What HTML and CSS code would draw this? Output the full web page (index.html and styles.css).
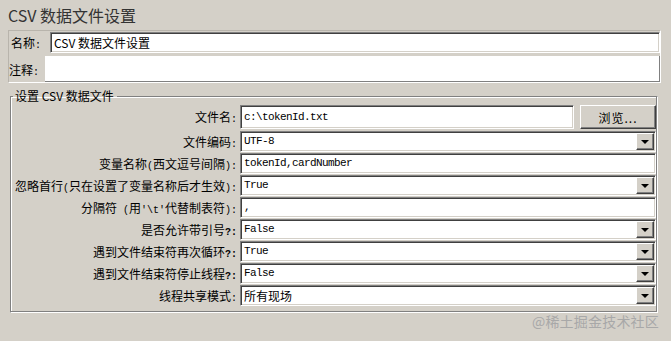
FILE: index.html
```html
<!DOCTYPE html>
<html lang="zh-CN">
<head>
  <meta charset="UTF-8">
  <title>CSV 数据文件设置</title>
  <link rel="stylesheet" href="styles.css">
</head>
<body>
  <h1 class="title">CSV 数据文件设置</h1>
  <div class="info">
    <div class="info-row">
      <label class="info-label">名称<span class="hw">:</span></label>
      <div class="field name-field">CSV 数据文件设置</div>
    </div>
    <div class="info-row comment-row">
      <label class="info-label">注释<span class="hw">:</span></label>
      <div class="comment-box"></div>
    </div>
  </div>

  <fieldset class="group">
    <legend>设置 CSV 数据文件</legend>
    <div class="grid">
      <label class="lbl first">文件名<span class="hw">:</span></label>
      <div class="file-row">
        <div class="field mono">c:\tokenId.txt</div>
        <button class="btn">浏览...</button>
      </div>

      <label class="lbl">文件编码<span class="hw">:</span></label>
      <div class="field combo mono">UTF-8<span class="arrow"></span></div>

      <label class="lbl">变量名称<span class="hw">(</span>西文逗号间隔<span class="hw">):</span></label>
      <div class="field mono">tokenId,cardNumber</div>

      <label class="lbl">忽略首行<span class="hw">(</span>只在设置了变量名称后才生效<span class="hw">):</span></label>
      <div class="field combo mono">True<span class="arrow"></span></div>

      <label class="lbl">分隔符<span class="hw"> (</span>用<span class="hw">'\t'</span>代替制表符<span class="hw">):</span></label>
      <div class="field mono">,</div>

      <label class="lbl">是否允许带引号<span class="hw q">?:</span></label>
      <div class="field combo mono">False<span class="arrow"></span></div>

      <label class="lbl">遇到文件结束符再次循环<span class="hw q">?:</span></label>
      <div class="field combo mono">True<span class="arrow"></span></div>

      <label class="lbl">遇到文件结束符停止线程<span class="hw q">?:</span></label>
      <div class="field combo mono">False<span class="arrow"></span></div>

      <label class="lbl">线程共享模式<span class="hw">:</span></label>
      <div class="field combo">所有现场<span class="arrow"></span></div>
    </div>
  </fieldset>

  <div class="watermark">@稀土掘金技术社区</div>
</body>
</html>
```

FILE: styles.css
```css
body {
  margin: 0;
  background: #d4d0c8;
  font-family: "Noto Sans CJK SC", "Liberation Sans", sans-serif;
  font-size: 12px;
  color: #000;
  width: 671px;
  height: 341px;
  position: relative;
  overflow: hidden;
}
.title {
  margin: 0;
  padding: 4px 0 0 8px;
  height: 26px;
  font-size: 16px;
  font-weight: normal;
  line-height: 22px;
  color: #333;
}
.info {
  margin: 0 10px 0 8px;
  border: 1px solid #b8b4ac;
  border-right-color: #fff;
  border-bottom-color: #fff;
  height: 51px;
}
.info-row {
  display: flex;
  align-items: center;
  height: 23px;
}
.info-label {
  width: 41px;
  padding-left: 2px;
  box-sizing: border-box;
  font-size: 12px;
}
.name-field {
  flex: 1;
  height: 22px;
}
.comment-row {
  margin-top: 2px;
  height: 26px;
}
.comment-row .info-label {
  width: 36px;
  padding-left: 0;
}
.comment-box {
  flex: 1;
  height: 26px;
  background: #fff;
  border-right: 1px solid #808080;
  border-bottom: 1px solid #808080;
  box-sizing: border-box;
}
.hw {
  font-family: "Liberation Mono", monospace;
  font-size: 10px;
}
.hw.q {
  font-weight: bold;
}
.field {
  position: relative;
  box-sizing: border-box;
  height: 21px;
  background: #fff;
  border-top: 1px solid #808080;
  border-left: 1px solid #808080;
  border-right: 1px solid #fff;
  border-bottom: 1px solid #fff;
  box-shadow: inset 1px 1px 0 #404040, inset -1px -1px 0 #d4d0c8;
  padding: 0 0 0 3px;
  line-height: 19px;
  white-space: nowrap;
}
.mono {
  font-family: "Liberation Mono", monospace;
  font-size: 11px;
  letter-spacing: -0.6px;
}
.group {
  margin: 6px 13px 0 10px;
  padding: 2px 0 3px 0;
  border: 1px solid #808080;
  border-right-color: #fff;
  border-bottom-color: #fff;
  box-shadow: inset -1px -1px 0 #808080, 1px 1px 0 #fff inset;
  height: 224px;
  box-sizing: border-box;
  min-width: 0;
}
.group legend {
  margin-left: 2px;
  padding: 0 3px 0 2px;
  font-size: 12px;
  line-height: 14px;
}
.grid {
  display: grid;
  grid-template-columns: 226px 1fr;
  column-gap: 3px;
  row-gap: 1px;
  margin-right: 1px;
  grid-template-rows: 25px;
  grid-auto-rows: 21px;
}
.lbl {
  text-align: right;
  line-height: 21px;
  white-space: nowrap;
}
.lbl.first {
  line-height: 24px;
}
.file-row {
  display: flex;
  gap: 6px;
  height: 24px;
}
.file-row .field {
  flex: 1;
  height: 24px;
  line-height: 22px;
}
.btn {
  width: 76px;
  height: 24px;
  padding: 0;
  background: #d4d0c8;
  font-family: "Noto Sans CJK SC", sans-serif;
  font-size: 12px;
  border-top: 1px solid #fff;
  border-left: 1px solid #fff;
  border-right: 1px solid #404040;
  border-bottom: 1px solid #404040;
  box-shadow: inset -1px -1px 0 #808080;
  letter-spacing: 1px;
}
.combo {
  padding-right: 20px;
}
.arrow {
  position: absolute;
  right: 1px;
  top: 1px;
  width: 18px;
  height: 17px;
  box-sizing: border-box;
  background: #d4d0c8;
  border-top: 1px solid #fff;
  border-left: 1px solid #fff;
  border-right: 1px solid #404040;
  border-bottom: 1px solid #404040;
  box-shadow: inset -1px -1px 0 #808080;
}
.arrow::after {
  content: "";
  position: absolute;
  left: 4px;
  top: 6px;
  border-left: 4px solid transparent;
  border-right: 4px solid transparent;
  border-top: 4px solid #000;
}
.watermark {
  position: absolute;
  right: 12px;
  top: 311px;
  font-size: 14px;
  color: #a8a8a8;
  letter-spacing: 0.2px;
}
```
